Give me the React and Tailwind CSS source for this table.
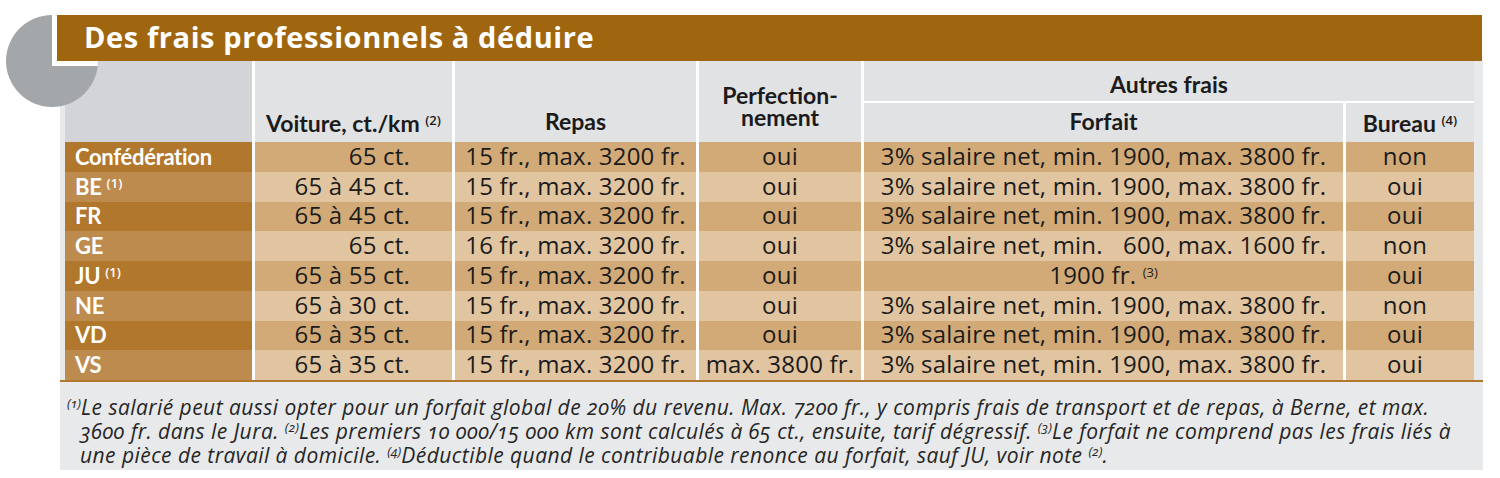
import React from "react";

const STD = "3% salaire net, min. 1900, max. 3800 fr.";
const REPAS = "15 fr., max. 3200 fr.";

const rows = [
  { label: "Confédération", voiture: "65 ct.", repas: REPAS, perf: "oui", forfait: "std", bureau: "non" },
  { label: "BE", sup: "(1)", voiture: "65 à 45 ct.", repas: REPAS, perf: "oui", forfait: "std", bureau: "oui" },
  { label: "FR", voiture: "65 à 45 ct.", repas: REPAS, perf: "oui", forfait: "std", bureau: "oui" },
  { label: "GE", voiture: "65 ct.", repas: "16 fr., max. 3200 fr.", perf: "oui", forfait: "ge", bureau: "non" },
  { label: "JU", sup: "(1)", voiture: "65 à 55 ct.", repas: REPAS, perf: "oui", forfait: "ju", bureau: "oui" },
  { label: "NE", voiture: "65 à 30 ct.", repas: REPAS, perf: "oui", forfait: "std", bureau: "non" },
  { label: "VD", voiture: "65 à 35 ct.", repas: REPAS, perf: "oui", forfait: "std", bureau: "oui" },
  { label: "VS", voiture: "65 à 35 ct.", repas: REPAS, perf: "max. 3800 fr.", forfait: "std", bureau: "oui" },
];

function Forfait({ kind }) {
  if (kind === "ge")
    return (
      <span>
        3% salaire net, min. <span className="invisible">1</span>600, max. 1600 fr.
      </span>
    );
  if (kind === "ju")
    return (
      <span>
        1900 fr.{" "}
        <span className="relative -top-[7px] text-[13px] leading-none tracking-normal">(3)</span>
      </span>
    );
  return <span>{STD}</span>;
}

function HSup({ children }) {
  return (
    <span className="relative -top-[7px] text-[13px] font-semibold leading-none font-['Open_Sans',sans-serif]">
      {children}
    </span>
  );
}

function FSup({ children }) {
  return <span className="relative -top-[7px] text-[13px] leading-none tracking-normal">{children}</span>;
}

export default function App() {
  return (
    <div className="w-[1500px] h-[478px] bg-white relative overflow-hidden font-['Open_Sans',sans-serif]">
      <svg className="absolute left-0 top-0 z-30 pointer-events-none" width="120" height="120" viewBox="0 0 120 120">
        <defs>
          <clipPath id="disc">
            <circle cx="52" cy="61" r="46" />
          </clipPath>
        </defs>
        <circle cx="52" cy="61" r="46" fill="#a4a7aa" />
        <rect x="52" y="0" width="80" height="66" fill="#ffffff" clipPath="url(#disc)" />
      </svg>

      <div className="relative z-40 ml-[57px] mt-[15px] w-[1425px] h-[46px] bg-[#a0660f] flex items-center pl-[27px] pb-[3px]">
        <h1 className="text-white font-bold text-[29px] leading-none tracking-[0.6px]">
          Des frais professionnels à déduire
        </h1>
      </div>

      <div className="ml-[60px] w-[1423px] bg-[#e8e9eb]">
        <div className="pl-[5px] pr-[9px]">
          <div className="relative z-20 grid grid-cols-[187px_197px_241px_162px_479px_128px] gap-x-[3px] bg-white text-[#1b1b1b]">
            {/* header */}
            <div className="row-span-2 bg-[#d2d4d7]" />
            <div className="row-span-2 bg-[#e1e2e4] flex items-end justify-center pb-[8px] font-['Lato',sans-serif] font-bold text-[23px] leading-[22px] whitespace-nowrap">
              <span>
                Voiture, ct./km <HSup>(2)</HSup>
              </span>
            </div>
            <div className="row-span-2 bg-[#e1e2e4] flex items-end justify-center pb-[10px] font-['Lato',sans-serif] font-bold text-[23px] leading-[22px]">
              Repas
            </div>
            <div className="row-span-2 bg-[#e1e2e4] flex flex-col items-center justify-end pb-[14px] font-['Lato',sans-serif] font-bold text-[23px] leading-[22px] text-center">
              <span className="block h-[22px]">Perfection-</span>
              <span className="block h-[22px]">nement</span>
            </div>
            <div className="col-span-2 h-[42px] bg-[#e1e2e4] border-b-2 border-white flex items-end justify-center pb-[6px] font-['Lato',sans-serif] font-bold text-[23px] leading-[22px]">
              Autres frais
            </div>
            <div className="h-[39px] bg-[#e1e2e4] flex items-end justify-center pb-[10px] font-['Lato',sans-serif] font-bold text-[23px] leading-[22px]">
              Forfait
            </div>
            <div className="h-[39px] bg-[#e1e2e4] flex items-end justify-center pb-[8px] font-['Lato',sans-serif] font-bold text-[23px] leading-[22px] whitespace-nowrap">
              <span>
                Bureau <HSup>(4)</HSup>
              </span>
            </div>

            {/* rows */}
            {rows.map((r, i) => {
              const dark = i % 2 === 0;
              const lab = dark ? "bg-[#b0772d]" : "bg-[#be8b4e]";
              const cell = dark ? "bg-[#d2aa78]" : "bg-[#e1c4a0]";
              const base = "h-[29.75px] flex items-center leading-none whitespace-nowrap";
              const data = `${base} ${cell} text-[24px] tracking-[0.2px] pb-[2px]`;
              return (
                <React.Fragment key={r.label}>
                  <div className={`${base} ${lab} pl-[10px] text-white font-bold font-['Lato',sans-serif] text-[22px] tracking-[-0.3px]`}>
                    <span>
                      {r.label}
                      {r.sup && (
                        <>
                          {" "}
                          <span className="relative -top-[7px] text-[13px] font-semibold font-['Open_Sans',sans-serif] tracking-normal">
                            {r.sup}
                          </span>
                        </>
                      )}
                    </span>
                  </div>
                  <div className={`${data} justify-end pr-[42px]`}>{r.voiture}</div>
                  <div className={`${data} justify-center`}>{r.repas}</div>
                  <div className={`${data} justify-center`}>{r.perf}</div>
                  <div className={`${data} justify-center`}>
                    <Forfait kind={r.forfait} />
                  </div>
                  <div className={`${data} justify-center pr-[10px]`}>{r.bureau}</div>
                </React.Fragment>
              );
            })}
          </div>
        </div>

        <div className="border-t-2 border-[#b0772d] pt-[13px] pb-[3px] pl-[20px] text-[21px] leading-[24px] italic tracking-[0.45px] text-[#262626] whitespace-nowrap oldstyle-nums">
          <div className="h-[24px] -ml-[13px]">
            <FSup>(1)</FSup>Le salarié peut aussi opter pour un forfait global de 20% du revenu. Max. 7200 fr., y compris frais de transport et de repas, à Berne, et max.
          </div>
          <div className="h-[24px]">
            3600 fr. dans le Jura. <FSup>(2)</FSup>Les premiers 10 000/15 000 km sont calculés à 65 ct., ensuite, tarif dégressif. <FSup>(3)</FSup>Le forfait ne comprend pas les frais liés à
          </div>
          <div className="h-[24px]">
            une pièce de travail à domicile. <FSup>(4)</FSup>Déductible quand le contribuable renonce au forfait, sauf JU, voir note <FSup>(2)</FSup>.
          </div>
        </div>
      </div>
    </div>
  );
}
